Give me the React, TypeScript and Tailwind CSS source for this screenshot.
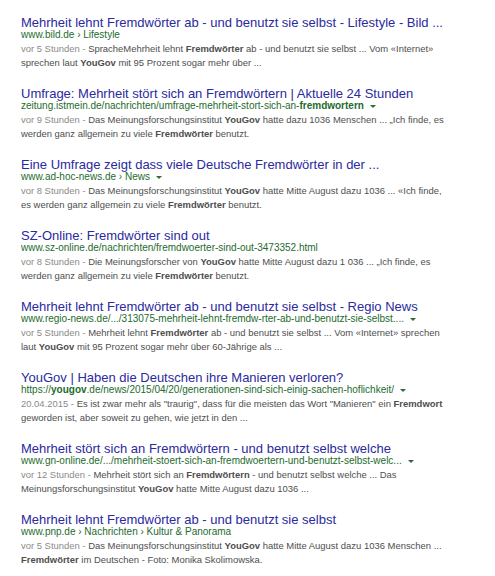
import React from "react";

type Seg = { t: string; b?: boolean };

interface Result {
  title: string;
  url: Seg[];
  arrow?: boolean;
  date: string;
  lines: Seg[][];
}

const results: Result[] = [
  {
    title: "Mehrheit lehnt Fremdwörter ab - und benutzt sie selbst - Lifestyle - Bild ...",
    url: [{ t: "www.bild.de › Lifestyle" }],
    date: "vor 5 Stunden",
    lines: [
      [
        { t: "SpracheMehrheit lehnt " },
        { t: "Fremdwörter", b: true },
        { t: " ab - und benutzt sie selbst ... Vom «Internet»" },
      ],
      [{ t: "sprechen laut " }, { t: "YouGov", b: true }, { t: " mit 95 Prozent sogar mehr über ..." }],
    ],
  },
  {
    title: "Umfrage: Mehrheit stört sich an Fremdwörtern | Aktuelle 24 Stunden",
    url: [
      { t: "zeitung.istmein.de/nachrichten/umfrage-mehrheit-stort-sich-an-" },
      { t: "fremdwortern", b: true },
    ],
    arrow: true,
    date: "vor 9 Stunden",
    lines: [
      [
        { t: "Das Meinungsforschungsinstitut " },
        { t: "YouGov", b: true },
        { t: " hatte dazu 1036 Menschen ... „Ich finde, es" },
      ],
      [{ t: "werden ganz allgemein zu viele " }, { t: "Fremdwörter", b: true }, { t: " benutzt." }],
    ],
  },
  {
    title: "Eine Umfrage zeigt dass viele Deutsche Fremdwörter in der ...",
    url: [{ t: "www.ad-hoc-news.de › News" }],
    arrow: true,
    date: "vor 8 Stunden",
    lines: [
      [
        { t: "Das Meinungsforschungsinstitut " },
        { t: "YouGov", b: true },
        { t: " hatte Mitte August dazu 1036 ... «Ich finde," },
      ],
      [{ t: "es werden ganz allgemein zu viele " }, { t: "Fremdwörter", b: true }, { t: " benutzt." }],
    ],
  },
  {
    title: "SZ-Online: Fremdwörter sind out",
    url: [{ t: "www.sz-online.de/nachrichten/fremdwoerter-sind-out-3473352.html" }],
    date: "vor 8 Stunden",
    lines: [
      [
        { t: "Die Meinungsforscher von " },
        { t: "YouGov", b: true },
        { t: " hatte Mitte August dazu 1 036 ... „Ich finde, es" },
      ],
      [{ t: "werden ganz allgemein zu viele " }, { t: "Fremdwörter", b: true }, { t: " benutzt." }],
    ],
  },
  {
    title: "Mehrheit lehnt Fremdwörter ab - und benutzt sie selbst - Regio News",
    url: [{ t: "www.regio-news.de/.../313075-mehrheit-lehnt-fremdw-rter-ab-und-benutzt-sie-selbst...." }],
    arrow: true,
    date: "vor 5 Stunden",
    lines: [
      [
        { t: "Mehrheit lehnt " },
        { t: "Fremdwörter", b: true },
        { t: " ab - und benutzt sie selbst ... Vom «Internet» sprechen" },
      ],
      [{ t: "laut " }, { t: "YouGov", b: true }, { t: " mit 95 Prozent sogar mehr über 60-Jährige als ..." }],
    ],
  },
  {
    title: "YouGov | Haben die Deutschen ihre Manieren verloren?",
    url: [
      { t: "https://" },
      { t: "yougov", b: true },
      { t: ".de/news/2015/04/20/generationen-sind-sich-einig-sachen-hoflichkeit/" },
    ],
    arrow: true,
    date: "20.04.2015",
    lines: [
      [
        { t: 'Es ist zwar mehr als "traurig", dass für die meisten das Wort "Manieren" ein ' },
        { t: "Fremdwort", b: true },
      ],
      [{ t: "geworden ist, aber soweit zu gehen, wie jetzt in den ..." }],
    ],
  },
  {
    title: "Mehrheit stört sich an Fremdwörtern - und benutzt selbst welche",
    url: [{ t: "www.gn-online.de/.../mehrheit-stoert-sich-an-fremdwoertern-und-benutzt-selbst-welc..." }],
    arrow: true,
    date: "vor 12 Stunden",
    lines: [
      [
        { t: "Mehrheit stört sich an " },
        { t: "Fremdwörtern", b: true },
        { t: " - und benutzt selbst welche ... Das" },
      ],
      [{ t: "Meinungsforschungsinstitut " }, { t: "YouGov", b: true }, { t: " hatte Mitte August dazu 1036 ..." }],
    ],
  },
  {
    title: "Mehrheit lehnt Fremdwörter ab - und benutzt sie selbst",
    url: [{ t: "www.pnp.de › Nachrichten › Kultur & Panorama" }],
    date: "vor 5 Stunden",
    lines: [
      [
        { t: "Das Meinungsforschungsinstitut " },
        { t: "YouGov", b: true },
        { t: " hatte Mitte August dazu 1036 Menschen ..." },
      ],
      [{ t: "Fremdwörter", b: true }, { t: " im Deutschen - Foto: Monika Skolimowska." }],
    ],
  },
];

function Segs({ segs }: { segs: Seg[] }) {
  return (
    <>
      {segs.map((s, i) =>
        s.b ? (
          <b key={i} className="font-bold">
            {s.t}
          </b>
        ) : (
          <span key={i}>{s.t}</span>
        )
      )}
    </>
  );
}

function ResultItem({ r }: { r: Result }) {
  return (
    <div className="mb-[17px]">
      <div className="text-[13px] leading-[15px] h-[14px] text-[#2b2a9e] whitespace-nowrap">{r.title}</div>
      <div className="flex items-center text-[10px] leading-[12px] h-[12px] text-[#1e6b2e] whitespace-nowrap">
        <span>
          <Segs segs={r.url} />
        </span>
        {r.arrow && (
          <span className="ml-[6px] inline-block w-0 h-0 border-l-[3px] border-r-[3px] border-t-[3.5px] border-l-transparent border-r-transparent border-t-[#2d6b3a]" />
        )}
      </div>
      <div className="mt-[1px] text-[9.45px] leading-[13.5px] text-[#4e4e4e]">
        {r.lines.map((line, i) => (
          <div key={i} className="whitespace-nowrap">
            {i === 0 && <span className="text-[#8a8a8a]">{r.date} - </span>}
            <Segs segs={line} />
          </div>
        ))}
      </div>
    </div>
  );
}

export default function App() {
  return (
    <div
      className="w-[495px] h-[576px] bg-white pt-[15px] pl-[21px] overflow-hidden"
      style={{ fontFamily: '"Liberation Sans", Arial, sans-serif' }}
    >
      {results.map((r, i) => (
        <ResultItem key={i} r={r} />
      ))}
    </div>
  );
}
